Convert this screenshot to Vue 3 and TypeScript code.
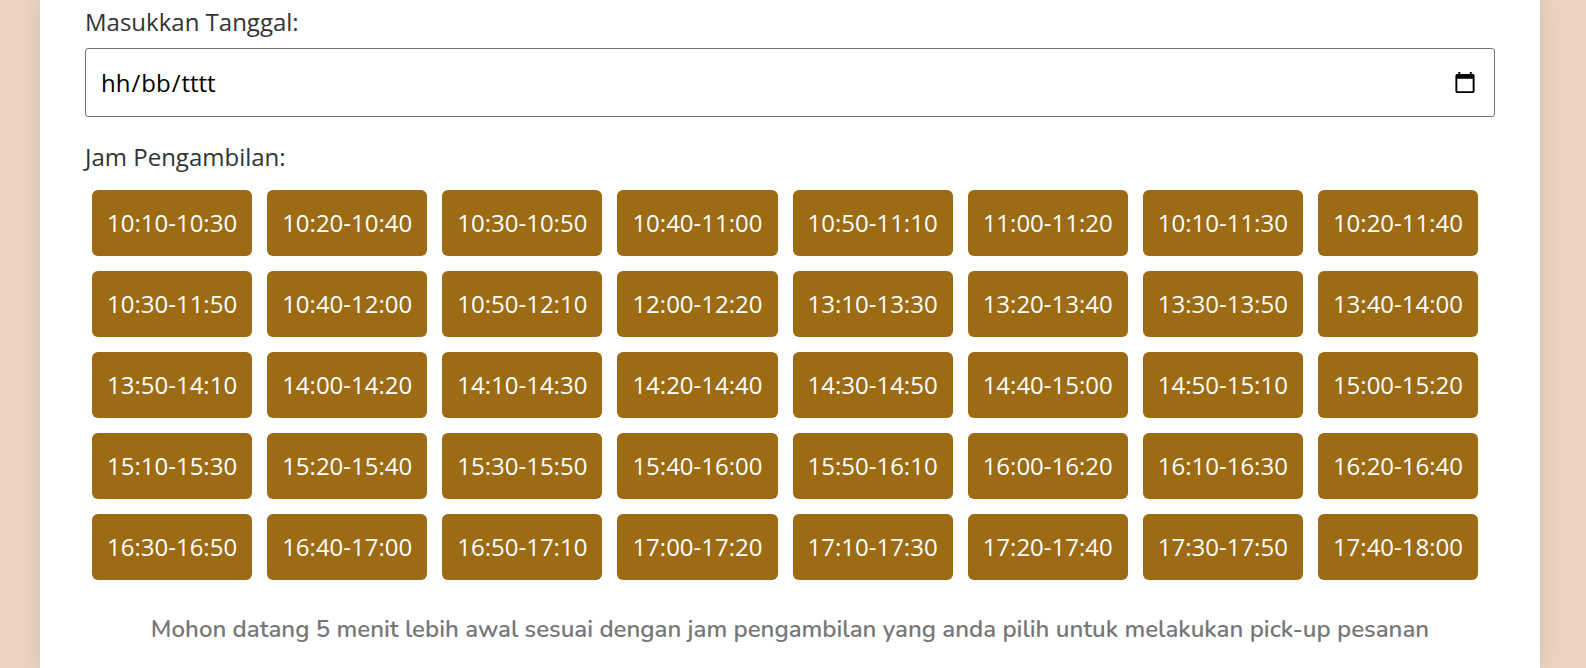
<script setup lang="ts">
import { ref } from 'vue'

const date = ref<string>('')
const selectedSlot = ref<string | null>(null)

const hint: string[] = ['hh', '/', 'bb', '/', 'tttt']

const slots: string[] = [
  '10:10-10:30', '10:20-10:40', '10:30-10:50', '10:40-11:00',
  '10:50-11:10', '11:00-11:20', '10:10-11:30', '10:20-11:40',
  '10:30-11:50', '10:40-12:00', '10:50-12:10', '12:00-12:20',
  '13:10-13:30', '13:20-13:40', '13:30-13:50', '13:40-14:00',
  '13:50-14:10', '14:00-14:20', '14:10-14:30', '14:20-14:40',
  '14:30-14:50', '14:40-15:00', '14:50-15:10', '15:00-15:20',
  '15:10-15:30', '15:20-15:40', '15:30-15:50', '15:40-16:00',
  '15:50-16:10', '16:00-16:20', '16:10-16:30', '16:20-16:40',
  '16:30-16:50', '16:40-17:00', '16:50-17:10', '17:00-17:20',
  '17:10-17:30', '17:20-17:40', '17:30-17:50', '17:40-18:00',
]
</script>

<template>
  <main class="page">
    <form class="panel" @submit.prevent>
      <label class="label" for="pickup-date">Masukkan Tanggal:</label>
      <div class="date-field">
        <input
          id="pickup-date"
          v-model="date"
          class="date-input"
          :class="{ empty: !date }"
          type="date"
          lang="id"
        />
        <!-- Indonesian format hint, shown until a date is chosen -->
        <span v-if="!date" class="hint" aria-hidden="true">
          <span v-for="(part, i) in hint" :key="i">{{ part }}</span>
        </span>
      </div>

      <p id="slot-label" class="label">Jam Pengambilan:</p>
      <div class="slots" role="group" aria-labelledby="slot-label">
        <button
          v-for="slot in slots"
          :key="slot"
          class="slot"
          type="button"
          :aria-pressed="selectedSlot === slot"
          @click="selectedSlot = slot"
        >
          {{ slot }}
        </button>
      </div>

      <p class="note">
        Mohon datang 5 menit lebih awal sesuai dengan jam pengambilan yang anda pilih untuk melakukan pick-up pesanan
      </p>
    </form>
  </main>
</template>

<style>
body {
  margin: 0;
  background: #ecd3c1;
}
</style>

<style scoped>
.page {
  min-height: 100vh;
  box-sizing: border-box;
  padding: 0 46px 0 40px;
  display: flex;
  font-family: 'Open Sans', 'Noto Sans', sans-serif;
  font-size: 24px;
  line-height: 36px;
  color: #333;
}

.panel {
  flex: 1;
  min-width: 0;
  box-sizing: border-box;
  padding: 4px 45px 0;
  background: #fff;
  box-shadow: 0 0 20px rgba(0, 0, 0, 0.1);
}

.label {
  display: block;
  margin: 0;
}

.date-field {
  position: relative;
  margin: 8px 0 22px;
}

.date-input {
  display: block;
  box-sizing: border-box;
  width: 100%;
  height: 69px;
  margin: 0;
  padding: 15px;
  border: 1px solid #767676;
  border-radius: 3px;
  background: #fff;
  font: inherit;
  color: #000;
}

.date-input.empty::-webkit-datetime-edit {
  opacity: 0;
}

.hint {
  position: absolute;
  inset: 0 auto 0 16px;
  display: flex;
  align-items: center;
  gap: 1px;
  color: #000;
  pointer-events: none;
}

.slots {
  display: flex;
  flex-wrap: wrap;
  gap: 15px;
  margin: 15px 7px 0;
}

.slot {
  padding: 15px;
  border: 0;
  border-radius: 6px;
  background: #9c6b14;
  font: inherit;
  color: #fff;
  cursor: pointer;
}

.note {
  margin: 31px 0 0;
  font-family: Nunito, 'Noto Sans', sans-serif;
  font-weight: 600;
  text-align: center;
  color: #777;
}
</style>
